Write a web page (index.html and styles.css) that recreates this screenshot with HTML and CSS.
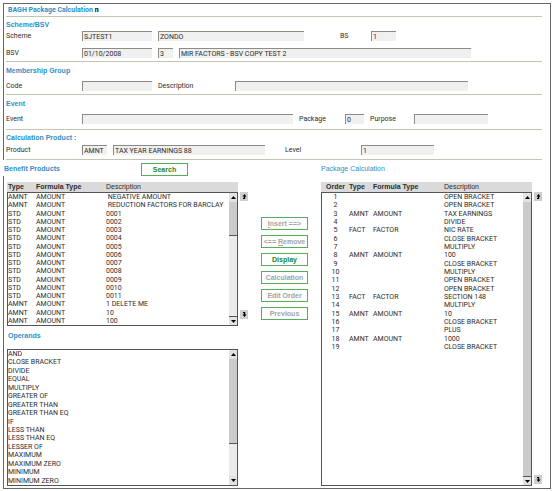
FILE: index.html
```html
<!DOCTYPE html>
<html lang="en">
<head>
  <meta charset="UTF-8" />
  <meta name="viewport" content="width=device-width, initial-scale=1.0"/>
  <title>BAGH Package Calculation</title>
  <link rel="stylesheet" href="styles.css">
</head>
<body>
  <div class="window">
    <form class="details">
      <h1>BAGH Package Calculation <span class="mark">n</span></h1>

      <section class="scheme">
        <h2>Scheme/BSV</h2>
        <div class="row row-scheme">
          <label for="scheme">Scheme</label>
          <input id="scheme" type="text" value="SJTEST1" readonly>
          <input type="text" aria-label="Scheme name" value="ZONDO" readonly>
          <label class="indent-wide" for="bs">BS</label>
          <input id="bs" type="text" value="1" readonly>
        </div>
        <div class="row row-bsv">
          <label for="bsv">BSV</label>
          <input id="bsv" type="text" value="01/10/2008" readonly>
          <input type="text" aria-label="BSV number" value="3" readonly>
          <input type="text" aria-label="BSV name" value="MIR FACTORS - BSV COPY TEST 2" readonly>
        </div>
      </section>

      <section class="group">
        <h2>Membership Group</h2>
        <div class="row row-group">
          <label for="code">Code</label>
          <input id="code" type="text" readonly>
          <label for="groupDesc">Description</label>
          <input id="groupDesc" type="text" readonly>
        </div>
      </section>

      <section class="event">
        <h2>Event</h2>
        <div class="row row-event">
          <label for="event">Event</label>
          <input id="event" type="text" readonly>
          <label for="package">Package</label>
          <input id="package" type="text" value="0" readonly>
          <label for="purpose">Purpose</label>
          <input id="purpose" type="text" readonly>
        </div>
      </section>

      <section class="product">
        <h2>Calculation Product :</h2>
        <div class="row row-product">
          <label for="product">Product</label>
          <input id="product" type="text" value="AMNT" readonly>
          <input type="text" aria-label="Product name" value="TAX YEAR EARNINGS 88" readonly>
          <label class="indent" for="level">Level</label>
          <input id="level" type="text" value="1" readonly>
        </div>
      </section>
    </form>

    <div class="titles">
      <div class="benefit-title">
        <h2>Benefit Products</h2>
        <button type="button" class="btn">Search</button>
      </div>
      <h2 class="package-title">Package Calculation</h2>
    </div>

    <main class="lists">
      <div class="left">
        <div class="list benefit">
          <table>
            <thead>
              <tr><th>Type</th><th>Formula Type</th><th class="plain">Description</th></tr>
            </thead>
            <tbody>
              <tr><td>AMNT</td><td>AMOUNT</td><td>&nbsp;NEGATIVE AMOUNT</td></tr>
              <tr><td>AMNT</td><td>AMOUNT</td><td>&nbsp;REDUCTION FACTORS FOR BARCLAY</td></tr>
              <tr><td>STD</td><td>AMOUNT</td><td>0001</td></tr>
              <tr><td>STD</td><td>AMOUNT</td><td>0002</td></tr>
              <tr><td>STD</td><td>AMOUNT</td><td>0003</td></tr>
              <tr><td>STD</td><td>AMOUNT</td><td>0004</td></tr>
              <tr><td>STD</td><td>AMOUNT</td><td>0005</td></tr>
              <tr><td>STD</td><td>AMOUNT</td><td>0006</td></tr>
              <tr><td>STD</td><td>AMOUNT</td><td>0007</td></tr>
              <tr><td>STD</td><td>AMOUNT</td><td>0008</td></tr>
              <tr><td>STD</td><td>AMOUNT</td><td>0009</td></tr>
              <tr><td>STD</td><td>AMOUNT</td><td>0010</td></tr>
              <tr><td>STD</td><td>AMOUNT</td><td>0011</td></tr>
              <tr><td>AMNT</td><td>AMOUNT</td><td>1 DELETE ME</td></tr>
              <tr><td>AMNT</td><td>AMOUNT</td><td>10</td></tr>
              <tr><td>AMNT</td><td>AMOUNT</td><td>100</td></tr>
            </tbody>
          </table>
          <div class="scroll">
            <span class="arrow"><svg viewBox="0 0 5 3"><path d="M0 3L2.5 0L5 3Z"/></svg></span>
            <span class="thumb"></span>
            <span class="arrow down"><svg viewBox="0 0 5 3"><path d="M0 0L2.5 3L5 0Z"/></svg></span>
          </div>
          <div class="jump">
            <button type="button" aria-label="First"><svg viewBox="0 0 8 9"><path d="M4.5 2L6.5 4.4H5.2V7H3V6H3.8V4.4H2.5Z"/></svg></button>
            <button type="button" aria-label="Last"><svg viewBox="0 0 8 9"><path d="M4.5 7L6.5 4.6H5.2V2H3V3H3.8V4.6H2.5Z"/></svg></button>
          </div>
        </div>

        <h2 class="operands-title">Operands</h2>
        <div class="list operands">
          <ul>
            <li>AND</li>
            <li>CLOSE BRACKET</li>
            <li>DIVIDE</li>
            <li>EQUAL</li>
            <li>MULTIPLY</li>
            <li>GREATER OF</li>
            <li>GREATER THAN</li>
            <li>GREATER THAN EQ</li>
            <li>IF</li>
            <li>LESS THAN</li>
            <li>LESS THAN EQ</li>
            <li>LESSER OF</li>
            <li>MAXIMUM</li>
            <li>MAXIMUM ZERO</li>
            <li>MINIMUM</li>
            <li>MINIMUM ZERO</li>
          </ul>
          <div class="scroll">
            <span class="arrow"><svg viewBox="0 0 5 3"><path d="M0 3L2.5 0L5 3Z"/></svg></span>
            <span class="thumb"></span>
            <span class="arrow down"><svg viewBox="0 0 5 3"><path d="M0 0L2.5 3L5 0Z"/></svg></span>
          </div>
        </div>
      </div>

      <div class="actions">
        <button type="button" class="btn" disabled><u>I</u>nsert ==&gt;</button>
        <button type="button" class="btn" disabled>&lt;== <u>R</u>emove</button>
        <button type="button" class="btn">Display</button>
        <button type="button" class="btn" disabled>Calculation</button>
        <button type="button" class="btn" disabled>Edit Order</button>
        <button type="button" class="btn" disabled>Previous</button>
      </div>

      <div class="list package">
        <table>
          <thead>
            <tr><th>Order</th><th>Type</th><th>Formula Type</th><th class="plain">Description</th></tr>
          </thead>
          <tbody>
            <tr><td>1</td><td></td><td></td><td>OPEN BRACKET</td></tr>
            <tr><td>2</td><td></td><td></td><td>OPEN BRACKET</td></tr>
            <tr><td>3</td><td>AMNT</td><td>AMOUNT</td><td>TAX EARNINGS</td></tr>
            <tr><td>4</td><td></td><td></td><td>DIVIDE</td></tr>
            <tr><td>5</td><td>FACT</td><td>FACTOR</td><td>NIC RATE</td></tr>
            <tr><td>6</td><td></td><td></td><td>CLOSE BRACKET</td></tr>
            <tr><td>7</td><td></td><td></td><td>MULTIPLY</td></tr>
            <tr><td>8</td><td>AMNT</td><td>AMOUNT</td><td>100</td></tr>
            <tr><td>9</td><td></td><td></td><td>CLOSE BRACKET</td></tr>
            <tr><td>10</td><td></td><td></td><td>MULTIPLY</td></tr>
            <tr><td>11</td><td></td><td></td><td>OPEN BRACKET</td></tr>
            <tr><td>12</td><td></td><td></td><td>OPEN BRACKET</td></tr>
            <tr><td>13</td><td>FACT</td><td>FACTOR</td><td>SECTION 148</td></tr>
            <tr><td>14</td><td></td><td></td><td>MULTIPLY</td></tr>
            <tr><td>15</td><td>AMNT</td><td>AMOUNT</td><td>10</td></tr>
            <tr><td>16</td><td></td><td></td><td>CLOSE BRACKET</td></tr>
            <tr><td>17</td><td></td><td></td><td>PLUS</td></tr>
            <tr><td>18</td><td>AMNT</td><td>AMOUNT</td><td>1000</td></tr>
            <tr><td>19</td><td></td><td></td><td>CLOSE BRACKET</td></tr>
          </tbody>
        </table>
        <div class="scroll">
          <span class="arrow"><svg viewBox="0 0 5 3"><path d="M0 3L2.5 0L5 3Z"/></svg></span>
          <span class="thumb"></span>
          <span class="arrow down"><svg viewBox="0 0 5 3"><path d="M0 0L2.5 3L5 0Z"/></svg></span>
        </div>
        <div class="jump">
          <button type="button" aria-label="First"><svg viewBox="0 0 8 9"><path d="M4.5 2L6.5 4.4H5.2V7H3V6H3.8V4.4H2.5Z"/></svg></button>
          <button type="button" aria-label="Last"><svg viewBox="0 0 8 9"><path d="M4.5 7L6.5 4.6H5.2V2H3V3H3.8V4.6H2.5Z"/></svg></button>
        </div>
      </div>
    </main>
  </div>
</body>
</html>
```

FILE: styles.css
```css
:root {
  --heading-color: #2f8fc8;
  --text-color: #2c2c2c;
  --frame-color: #666;
  --rule-color: #c4c4b2;
  --field-color: #f0f0f0;
  --green: #58ad5c;
  --ui-font: "Liberation Sans", Arial, sans-serif;
  --data-font: Roboto, "Liberation Sans", sans-serif;
}

* {
  box-sizing: border-box;
}

body {
  margin: 0;
  padding: 3px 3px 2px;
  min-height: 100vh;
  display: flex;
  background: #fff;
  color: var(--text-color);
  font-family: var(--data-font);
  font-size: 7px;
  line-height: 9px;
}

.window {
  flex: 1;
  min-width: 0;
  display: flex;
  flex-direction: column;
  border: 1px solid var(--frame-color);
  border-left: none;
}

h1,
h2 {
  margin: 0;
  font-size: 7px;
  line-height: 9px;
  font-weight: bold;
  color: var(--heading-color);
}

h2 {
  font-family: var(--ui-font);
}

/* scheme, group, event and product fields */
.details {
  padding: 0 8px 0 2px;
  border-left: 1px solid var(--frame-color);
}

h1 {
  padding: 2px 2px 1px;
  border-bottom: 1px solid var(--rule-color);
}

.mark {
  color: #000;
}

.details section {
  border-bottom: 1px solid var(--rule-color);
}

.scheme {
  padding: 3px 0;
}

.group {
  padding: 4px 0 3px;
}

.event {
  padding: 4px 0 5px;
}

.product {
  padding: 3px 0 4px;
}

.row {
  display: grid;
  column-gap: 6px;
  margin-top: 6px;
}

.row label {
  line-height: 10px;
}

.row-scheme {
  grid-template-columns: 70px 70px 1fr 55px 25px;
  margin-top: 2px;
  padding-right: 146px;
}

.row-bsv {
  grid-template-columns: 70px 70px 15px 1fr;
  margin-top: 7px;
  padding-right: 71px;
}

.row-group {
  grid-template-columns: 70px 70px 71px 1fr;
  padding-right: 74px;
}

.row-event {
  grid-template-columns: 70px 1fr 40px 19px 38px 74px;
  padding-right: 54px;
}

.row-product {
  grid-template-columns: 70px 25px 1fr 84px 73px;
  margin-top: 3px;
  padding-right: 108px;
}

.indent {
  padding-left: 14px;
}

.indent-wide {
  padding-left: 30px;
}

input {
  width: 100%;
  min-width: 0;
  height: 10px;
  margin: 0;
  padding: 0 1px;
  border: 0 solid #8c8c84;
  border-width: 1px 0 0 1px;
  border-radius: 0;
  background: var(--field-color);
  color: var(--text-color);
  font: inherit;
  outline: none;
}

/* titles above the lists */
.titles {
  display: grid;
  grid-template-columns: 244fr 47px 221fr;
  column-gap: 13px;
  padding-right: 8px;
  padding-left: 1px;
}

.benefit-title {
  display: flex;
  height: 16px;
  align-items: center;
}

.benefit-title h2 {
  flex: 0 0 137px;
}

.benefit-title .btn {
  width: 47px;
  margin-top: 3px;
}

.package-title {
  grid-column: 3;
  align-self: center;
  font-weight: normal;
}

.btn {
  height: 13px;
  padding: 0;
  border: 1px solid var(--green);
  border-radius: 0;
  background: #fff;
  color: #23862a;
  font-family: var(--ui-font);
  font-size: 7px;
  font-weight: bold;
  line-height: 9px;
  white-space: nowrap;
}

.btn:disabled {
  color: #a4a4a4;
}

/* lists */
.lists {
  flex: 1;
  display: grid;
  grid-template-columns: 241fr 47px 221fr;
  column-gap: 13px;
  padding: 6px 8px 2px 3px;
  border-left: 1px solid var(--frame-color);
}

.left {
  display: flex;
  flex-direction: column;
}

.list {
  display: grid;
  grid-template-rows: minmax(0, 1fr);
  grid-template-columns: 1fr 9px 10px;
}

.benefit {
  height: 144px;
}

.operands-title {
  margin: 5px 1px 9px;
}

.operands {
  flex: 1;
}

table {
  display: flex;
  flex-direction: column;
  min-width: 0;
}

thead {
  display: block;
  height: 10px;
  background: #dadada;
}

tbody,
ul {
  flex: 1;
  display: grid;
  min-height: 0;
  margin: 0;
  padding: 0;
  border: 1px solid #555;
  border-right: none;
  line-height: 8px;
  list-style: none;
}

.benefit tbody,
ul {
  grid-template-rows: repeat(16, minmax(0, 1fr));
}

/* room for 35 rows, the unused ones stay blank */
.package tbody {
  grid-template-rows: repeat(35, minmax(0, 1fr));
}

tr {
  display: grid;
}

.benefit tr {
  grid-template-columns: 28px 70px 1fr;
}

.package tr {
  grid-template-columns: 27px 24px 71px 1fr;
}

th,
td {
  padding: 0;
  text-align: left;
  white-space: nowrap;
}

th {
  font-family: var(--ui-font);
  line-height: 10px;
}

thead tr {
  padding-left: 1px;
}

.plain {
  font-weight: normal;
}

.package td:first-child,
.package th:first-child {
  text-align: center;
}

/* scroll bars */
.scroll {
  display: flex;
  flex-direction: column;
  border: 1px solid #555;
  border-left: none;
  background: #ebebeb;
}

.benefit .scroll,
.package .scroll {
  margin-top: 10px;
  box-shadow: 0 -10px 0 #dadada;
}

.arrow {
  flex: 0 0 9px;
  display: flex;
  align-items: center;
  justify-content: center;
  background: #e2e2e2;
}

.arrow svg {
  width: 5px;
  height: 3px;
}

.arrow.down {
  margin-top: auto;
  border-top: 1px solid #555;
}

.operands .arrow.down {
  border-top: none;
}

.thumb {
  height: 34px;
  border-bottom: 1px solid #555;
  background: #cbcbcb;
}

.operands .thumb {
  height: 85px;
}

.package .thumb {
  flex: 1;
  border-bottom: none;
}

.jump {
  display: flex;
  flex-direction: column;
  justify-content: space-between;
  padding: 10px 0 2px 2px;
}

.benefit .jump {
  padding-bottom: 7px;
}

.jump button {
  width: 8px;
  height: 9px;
  padding: 0;
  border: none;
  background: #cfcfcf;
}

.jump svg {
  display: block;
  width: 8px;
  height: 9px;
}

.actions {
  display: flex;
  flex-direction: column;
  gap: 5px;
  padding-top: 35px;
}
```
